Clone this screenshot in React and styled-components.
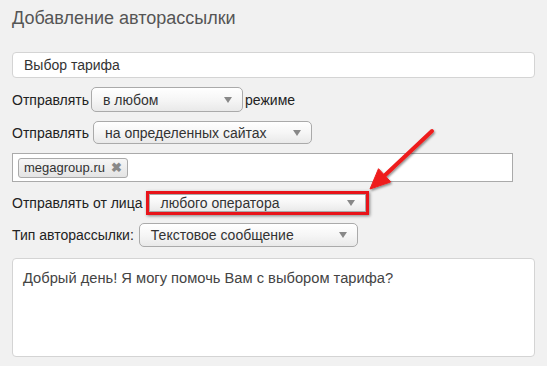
import React from 'react';
import styled, { createGlobalStyle } from 'styled-components';

const GlobalStyle = createGlobalStyle`
    html, body {
        margin: 0;
        padding: 0;
        background: #f1f1f1;
    }
    body {
        font-family: "Liberation Sans", Arial, sans-serif;
        font-size: 14px;
        color: #222;
    }
`;

const Page = styled.div`
    position: relative;
    width: 547px;
    height: 366px;
    box-sizing: border-box;
    padding: 8px 12px 0 12px;
    overflow: hidden;
`;

const Title = styled.h1`
    margin: 0 0 24px 0;
    font-size: 18px;
    font-weight: normal;
    color: #555;
    line-height: 20px;
`;

const TextInput = styled.div`
    height: 26px;
    box-sizing: border-box;
    border: 1px solid #d4d4d4;
    border-radius: 4px;
    background: #fff;
    padding: 0 11px;
    display: flex;
    align-items: center;
    color: #333;
    margin-bottom: 9px;
`;

const Row = styled.div`
    display: flex;
    align-items: center;
    gap: ${p => p.$gap || 2}px;
    margin-bottom: ${p => p.$mb}px;
    height: ${p => p.$h || 24}px;
`;

const Label = styled.span`
    color: #222;
    white-space: nowrap;
`;

const Select = styled.div`
    width: ${p => p.$w}px;
    height: ${p => p.$h || 24}px;
    box-sizing: border-box;
    border: 1px solid #aaa;
    border-radius: ${p => (p.$square ? 0 : 5)}px;
    background: linear-gradient(to bottom, #ffffff 0%, #f6f6f6 50%, #e9e9e9 100%);
    display: flex;
    align-items: center;
    justify-content: space-between;
    padding: 0 10px 0 11px;
    color: #333;
    white-space: nowrap;
`;

const Caret = styled.span`
    width: 0;
    height: 0;
    border-left: 4px solid transparent;
    border-right: 4px solid transparent;
    border-top: 6px solid #888;
`;

const Highlight = styled.div`
    border: 3px solid #e8141a;
    box-shadow: 1px 1px 3px rgba(0, 0, 0, 0.45);
    display: flex;
`;

const TagBox = styled.div`
    height: 29px;
    box-sizing: border-box;
    width: 501px;
    border: 1px solid #aaa;
    background: #fff;
    display: flex;
    align-items: center;
    padding: 0 5px;
    margin-bottom: 9px;
`;

const Chip = styled.span`
    display: inline-flex;
    align-items: center;
    gap: 6px;
    height: 20px;
    box-sizing: border-box;
    padding: 0 5px 0 5px;
    border: 1px solid #aaa;
    border-radius: 3px;
    background: linear-gradient(to bottom, #f6f6f6 0%, #e4e4e4 100%);
    color: #333;
    font-size: 13px;
`;

const ChipClose = styled.span`
    color: #888;
    font-weight: bold;
    font-size: 13px;
`;

const TextArea = styled.div`
    height: 99px;
    box-sizing: border-box;
    border: 1px solid #d4d4d4;
    border-radius: 4px;
    background: #fff;
    padding: 11px 10px;
    color: #444;
    font-size: 14.7px;
    margin-top: 11px;
`;

const Overlay = styled.svg`
    position: absolute;
    left: 0;
    top: 0;
    pointer-events: none;
`;

function SelectBox({ width, height, square, children }) {
    return (
        <Select $w={width} $h={height} $square={square}>
            <span>{children}</span>
            <Caret />
        </Select>
    );
}

export default function App() {
    return (
        <>
            <GlobalStyle />
            <Page>
                <Title>Добавление авторассылки</Title>
                <TextInput>Выбор тарифа</TextInput>

                <Row $mb={9} $h={25}>
                    <Label>Отправлять</Label>
                    <SelectBox width={152} height={25}>в любом</SelectBox>
                    <Label>режиме</Label>
                </Row>

                <Row $mb={9} $h={23} $gap={4}>
                    <Label>Отправлять</Label>
                    <SelectBox width={219} height={23}>на определенных сайтах</SelectBox>
                </Row>

                <TagBox>
                    <Chip>
                        megagroup.ru
                        <ChipClose>✖</ChipClose>
                    </Chip>
                </TagBox>

                <Row $mb={8} $h={24} $gap={3}>
                    <Label>Отправлять от лица</Label>
                    <Highlight>
                        <SelectBox width={217} height={18} square>любого оператора</SelectBox>
                    </Highlight>
                </Row>

                <Row $mb={0} $h={24} $gap={5}>
                    <Label>Тип авторассылки:</Label>
                    <SelectBox width={219}>Текстовое сообщение</SelectBox>
                </Row>

                <TextArea>Добрый день! Я могу помочь Вам с выбором тарифа?</TextArea>

                <Overlay width="547" height="366" viewBox="0 0 547 366">
                    <defs>
                        <filter id="shadow" x="-20%" y="-20%" width="140%" height="140%">
                            <feDropShadow dx="1" dy="1.5" stdDeviation="1.2" floodColor="#000" floodOpacity="0.45" />
                        </filter>
                    </defs>
                    <g filter="url(#shadow)" fill="#ee1c1c" stroke="#ee1c1c">
                        <line x1="432" y1="131" x2="382" y2="178" strokeWidth="4" strokeLinecap="round" />
                        <polygon points="370,189 378.5,168.7 390.7,181.9" strokeWidth="1" strokeLinejoin="round" />
                    </g>
                </Overlay>
            </Page>
        </>
    );
}
